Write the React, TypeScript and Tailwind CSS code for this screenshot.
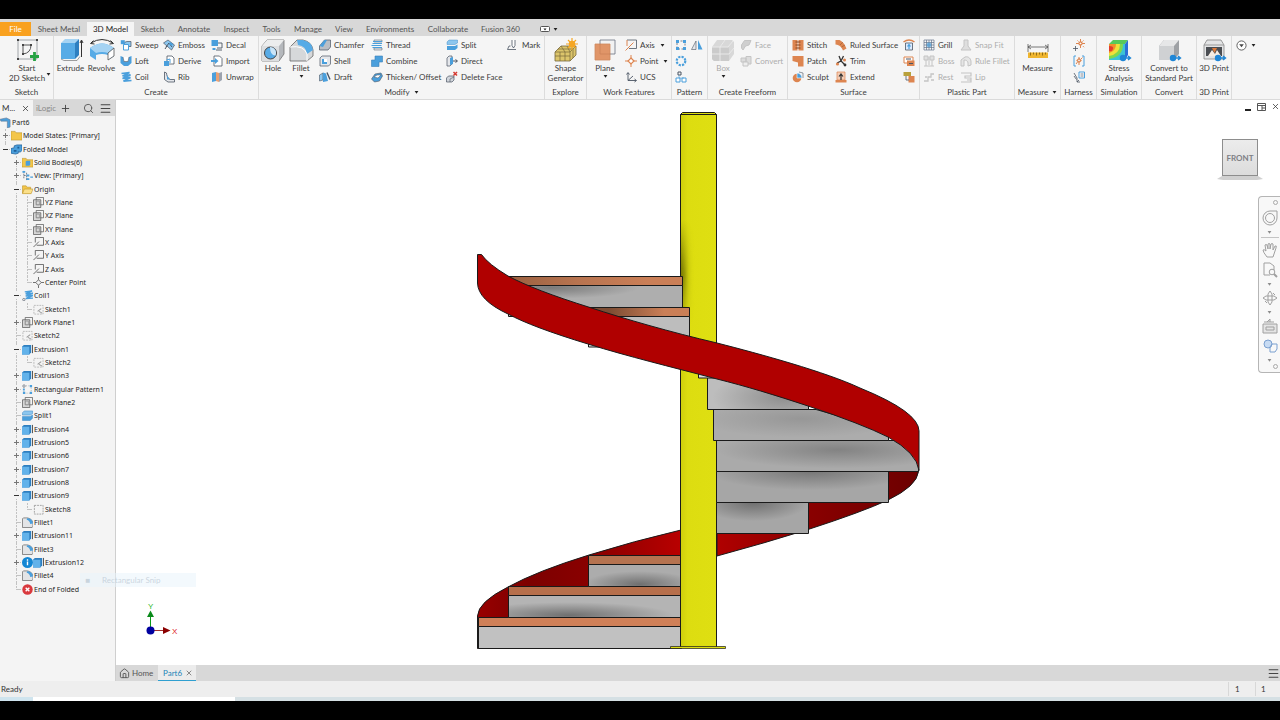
import React from 'react';
import { Menu, Plus, Search, X, Home } from 'lucide-react';
import clsx from 'clsx';

const BLUE = '#4a9fdc';
const LIGHT = '#8cc6ee';
const DARK = '#4b5563';
const ORANGE = '#dd8550';
const MUTE = '#c4c4c4';

// Iconos pequeños de la cinta, en una retícula de 12x12
const SMALL: Record<string, React.ReactNode> = {
  sweep: <><path d="M4 5.500Q4 2.500 7 2.500h4v5h-4" fill={LIGHT} stroke={DARK} strokeWidth=".7" /><path d="M.8 1.200h4v4h-4z" fill={BLUE} /><path d="M3.500 5.500h5v5.500h-5z" fill="#fff" stroke={BLUE} /></>,
  loft: <><path d="M.5 1l2.500 1 1 4.500h4L9 2l2.500-1v7L8 11H4L.5 8z" fill={BLUE} /><path d="M3 2l1 4.500h4L9 2" fill="#fff" stroke={DARK} strokeWidth=".6" /></>,
  coil: <path d="M1.500 2.500l8-1-7 3.400 8-1-8 3.600 8-1-7 3.600 8-.6" fill="none" stroke={BLUE} strokeWidth="1.700" />,
  emboss: <><path d="M.5 4l4.500-3 6.500 5-3 5z" fill={LIGHT} stroke={DARK} strokeWidth=".7" /><path d="M3 8l3-4 3 4M2 10l2-3" stroke={DARK} fill="none" /><path d="M7 3l3 2-1 2-3-2z" fill={BLUE} /></>,
  derive: <><path d="M4 1h5l2 2v6H4z" fill="#fff" stroke={DARK} strokeWidth=".8" /><path d="M1 6h5v5H1z" fill={BLUE} /><path d="M3.500 5L7 4v4" fill="none" stroke={BLUE} /></>,
  rib: <><path d="M1.500 1v7.500L5 11h6.500V8.500H7C4.500 7 3.500 4 3.500 2z" fill="#e5e7eb" stroke={DARK} strokeWidth=".8" /><path d="M4 3c0 3 2 5 4 5.500H4z" fill={BLUE} /></>,
  decal: <><path d="M.5 1h6.500v6H.5z" fill={BLUE} /><path d="M7 4h4v5H6M5 11h6" fill="none" stroke={DARK} strokeWidth=".9" /><path d="M1.500 9h3v2h-3z" fill={BLUE} /></>,
  import: <><path d="M3 1h5.500L11 3.500V11H3z" fill="#fff" stroke={DARK} strokeWidth=".8" /><path d="M0 5h4V3l3.500 3L4 9V7H0z" fill={BLUE} /></>,
  unwrap: <><path d="M1 2l4-1v9l-4 1z" fill={BLUE} /><path d="M5 1l3 1v9l-3-1z" fill="#e8a074" /><path d="M8 2l3-1v8l-3 2z" fill="#9ca3af" /></>,
  chamfer: <><path d="M.5 7l5-6h6v7L9 11H.5z" fill="#b9bec5" stroke={DARK} strokeWidth=".7" /><path d="M.5 7l5-6h2.500L4 8z" fill={BLUE} /></>,
  shell: <><path d="M1 3l2-2h8.500v8L9.500 11H1z" fill="#e5e7eb" stroke={DARK} strokeWidth=".7" /><path d="M3 4h5v5H3z" fill={BLUE} /><path d="M5 4h3v3H5z" fill="#fff" /></>,
  draft: <><path d="M.5 4l3.500-2v7l-3.500 1z" fill={LIGHT} stroke={DARK} strokeWidth=".6" /><path d="M4 1.500l3 1 2 7.500-5 1z" fill={BLUE} /><path d="M8 1.500l3 7" stroke={DARK} strokeWidth="1.400" /></>,
  thread: <><path d="M3 1h8v2H3zM3 9h8v2H3z" fill="#e5e7eb" stroke={DARK} strokeWidth=".5" /><path d="M1.500 4.500h9.500M.5 6.500h10M1.500 8.500h9.500M2 2.500h9" stroke={BLUE} strokeWidth="1.100" /></>,
  combine: <path d="M.5 5H4V1h7.500v6H8v4.500H.5z" fill={BLUE} stroke="#3b82b8" strokeWidth=".6" />,
  thicken: <><path d="M.5 8L4 3l6-1 1.500 3-3 5-5 1z" fill={BLUE} stroke={DARK} strokeWidth=".6" /><path d="M3 6l3-2h4L7 7z" fill="#fff" stroke={DARK} strokeWidth=".5" /></>,
  split: <><path d="M1 3l2-2h8.500v3L9 5.500H1z" fill={LIGHT} stroke="#2e7fc0" strokeWidth=".4" /><path d="M1 7h8l2.500-1.500V9L9 11H1z" fill={BLUE} /></>,
  direct: <><path d="M1 3l2-2h3v8l-2 2H1z" fill="#e5e7eb" stroke={DARK} strokeWidth=".7" /><path d="M4 3l3-1v7l-3 1z" fill={BLUE} /><path d="M7 6h4M9.500 4.500L11.500 6 9.500 7.500" fill="none" stroke={DARK} /></>,
  deleteFace: <><path d="M.5 7l2-2H8v4l-2 2H.5z" fill="#d1d5db" stroke={DARK} strokeWidth=".7" /><path d="M4 11V8l4-2" fill="none" stroke={DARK} strokeWidth=".6" /><path d="M7.500 1l3.500 3.500M11 1L7.500 4.500" stroke="#d63a32" strokeWidth="1.500" /></>,
  mark: <><path d="M5 1v5.500L6.500 9 8 6.500V1" fill="#fff" stroke={DARK} strokeWidth=".8" /><path d="M3.500 7H2l-1.500 3.500h8.500" fill="none" stroke={DARK} strokeWidth=".8" /></>,
  axis: <><path d="M2 1h9.500v8.500H4" fill="none" stroke={DARK} strokeWidth=".8" /><path d="M2 1v6M.5 11.500l8-8" stroke={ORANGE} fill="none" /></>,
  point: <><path d="M6 3l3 3-3 3-3-3z" fill="#fff" stroke={ORANGE} strokeWidth="1.200" /><path d="M6 0v3M6 9v3M0 6h3M9 6h3" stroke={ORANGE} /></>,
  ucs: <><path d="M3 2v7.500h8M3 9.500l5-4.500M1.500 3.500L3 1.500l1.500 2M9.500 8L11.500 9.500l-2 1.500" fill="none" stroke={DARK} strokeWidth=".9" /></>,
  rectPattern: <><path d="M2 2h8v8H2z" fill="none" stroke={DARK} strokeWidth=".7" strokeDasharray="2 1.500" /><path d="M1 1h3v3H1zM8 1h3v3H8zM1 8h3v3H1zM8 8h3v3H8z" fill={BLUE} /></>,
  circPattern: <circle cx="6" cy="6" r="4.300" fill="none" stroke={BLUE} strokeWidth="2.200" strokeDasharray="2.200 1.177" />,
  sketchPattern: <><path d="M3 1h3v3H3z" fill="none" stroke={DARK} /><path d="M1 7h4v4H1zM7 7h4v4H7z" fill="#fff" stroke={BLUE} /><path d="M4 4v3h5" fill="none" stroke={BLUE} strokeWidth=".6" /></>,
  mirror: <><path d="M5 2v8.500H.5z" fill="#e5e7eb" stroke={DARK} strokeWidth=".6" /><path d="M7 1v9.500h4.500z" fill={BLUE} /></>,
  face: <path d="M1.500 6l3-4.500H11L9 6 5.500 7 3 11 1.500 9z" fill="#cfcfcf" stroke={MUTE} />,
  convert: <><path d="M1 3h5v4H1zM6 1.500h5v7.500H6z" fill="#dcdcdc" stroke={MUTE} /><path d="M3 7h5v4H3z" fill="#eee" stroke={MUTE} /></>,
  stitch: <><path d="M.5 1h5v10.500h-5zM6.500 1h5v10.500h-5z" fill={ORANGE} /><path d="M3.500 3h5M3.500 6h5M3.500 9h5" stroke="#7c3f1d" strokeWidth=".9" /></>,
  patch: <path d="M.5 1h11v10.500H6V7.500L.5 6z" fill={ORANGE} />,
  sculpt: <><circle cx="5" cy="7" r="4.300" fill={ORANGE} /><path d="M5 2a5 5 0 0 1 5 5H5z" fill={BLUE} stroke="#fff" strokeWidth=".6" /><path d="M7 1l4 1v5" fill="none" stroke={DARK} strokeWidth=".6" /></>,
  ruled: <><path d="M.5 1h4C8 3 9.500 5 11.500 9.500L8 11.500C6.500 8 5 6 .5 5.500z" fill={ORANGE} /><path d="M5 6L8 3M6.500 8L10 6" stroke="#9c552c" strokeWidth=".6" /></>,
  trim: <><path d="M4 1l2 5 4 4M8.500 1L6 6l-4 2" stroke="#333" strokeWidth="1.300" fill="none" /><circle cx="9.500" cy="5" r="1.500" fill={ORANGE} /><circle cx="2.500" cy="9" r="1.600" fill={ORANGE} /><circle cx="10" cy="10" r="1.400" fill="#333" /></>,
  extend: <><path d="M.5 9h11v2.500H.5z" fill={ORANGE} /><path d="M2 1h8v8H2z" fill="#f4cdb5" stroke={ORANGE} strokeWidth=".7" /><path d="M6 9V4M4 5.500L6 3l2 2.500" fill="none" stroke="#333" strokeWidth="1.200" /></>,
  replaceFace: <><path d="M.5 3Q6-1 11.500 3" fill="none" stroke={ORANGE} strokeWidth="1.500" /><path d="M2.500 4h7v7h-7z" fill="#dbeafe" stroke={DARK} strokeWidth=".8" /><path d="M6 10V6M4.500 7.500L6 5.500l1.500 2" stroke={BLUE} strokeWidth="1.200" fill="none" /></>,
  repair: <><path d="M1 2h9v6H1z" fill="#fff" stroke={ORANGE} /><path d="M4 5.500h7.500V11H4z" fill={ORANGE} /><path d="M3 4h5M6 8.500h4" stroke={DARK} /></>,
  fitMesh: <><path d="M.5 1H8v4H.5z" fill="#b9a13c" /><path d="M5.500 5h6v6.500h-6z" fill={ORANGE} /><path d="M3 5v4h3" fill="none" stroke={DARK} strokeWidth=".8" /></>,
  grill: <><path d="M1 1h10v10H1zM3.500 1v10M6 1v10M8.500 1v10M1 3.500h10M1 6h10M1 8.500h10" stroke="#64748b" strokeWidth=".7" fill="none" /><circle cx="6" cy="6" r="2.400" fill={BLUE} opacity=".7" /></>,
  boss: <path d="M1 1h4v4H1zM7 1h4v4H7zM3 5v6M9 5v6M1 11h10M6 2v8" fill="#e0e0e0" stroke={MUTE} />,
  rest: <path d="M1 10h4V6h3V3h3M2 6h2M8 9h3" fill="none" stroke={MUTE} strokeWidth="1.300" />,
  snapFit: <path d="M4 1h4v6l3 4H1l3-4z" fill="#dedede" stroke={MUTE} />,
  ruleFillet: <path d="M1 5l4-3c4-1 6 2 6 5v3l-3 1V8c0-2-2-3-4-3v6H1z" fill="#e6e6e6" stroke={MUTE} />,
  lip: <path d="M1 2h10v3H5v2h6v4H1M7 9h4" fill="none" stroke={MUTE} strokeWidth="1.200" />,
  harnessAdd: <><path d="M7.500 2.500l2 2-2 2-2-2z" fill="#fff" stroke={ORANGE} strokeWidth="1.200" /><path d="M7.500 0v2M7.500 7v2M3 4.500h2M10 4.500h2M4.500 1.500l1 1M10 7.200l1 1M10.500 1.500l-1 1" stroke={ORANGE} /><path d="M0 9.500h5M2.500 7v5" stroke={DARK} strokeWidth=".8" /></>,
  harnessGroup: <><path d="M3 1H1v10h2M9 1h2v10H9" fill="none" stroke={BLUE} /><path d="M6 3.500l2 2-2 2-2-2z" fill="none" stroke={ORANGE} strokeWidth="1.200" /><path d="M6 2v1.500M6 8v2M3 9l1.500-2M8 4l1.500-1.500" stroke={ORANGE} /></>,
  harnessProps: <><path d="M6 1h5.500v6H6z" fill="#fff" stroke={BLUE} /><path d="M7.500 3h3M7.500 5h3" stroke={DARK} strokeWidth=".7" /><path d="M1 2l3 5v4h3M1 5l2.500 3.500M6 9l-2 2" stroke={DARK} fill="none" strokeWidth=".8" /></>,
};

// Iconos grandes, retícula de 26x24
const LARGE: Record<string, React.ReactNode> = {
  sketch: <><path d="M4 2h19v19H4z" fill="none" stroke="#8a8f96" strokeWidth=".8" /><path d="M9 7v9M9 7h8q0 8-8 9" fill="none" stroke="#555" /><g fill="#444"><path d="M3 1h2v2H3zM22 1h2v2h-2zM3 20h2v2H3zM8 6h2v2H8zM16 6h2v2h-2zM8 15h2v2H8z" /></g><path d="M16 18.500h9M20.500 14v9" stroke="#27a244" strokeWidth="2.800" /></>,
  extrude: <><path d="M3 5l4-4h14l-4 4z" fill="#a5d3f3" /><path d="M3 5h14v16H3z" fill="#57abe6" /><path d="M17 5l4-4v16l-4 4z" fill="#2e7fc0" /><path d="M3 21l3 1.500h13l3-4" fill="none" stroke="#777" strokeWidth=".7" /><path d="M23.500 3v16M22 5l1.500-3L25 5" fill="none" stroke="#333" /></>,
  revolve: <><path d="M1 10q12-9 24 0v8l-6 4v-5q-6-2-12 0v5l-6-4z" fill="#57abe6" /><path d="M1 10q12-9 24 0l-6 5q-6-2-12 0z" fill="#a5d3f3" /><path d="M19 15l6-5v8l-6 4z" fill="#fff" stroke="#555" strokeWidth=".8" /><path d="M2 5Q13-2 24 5M21.500 2.500L24.500 5.500l-4 .5M4.500 2.500L1.500 5.500l4 .5" fill="none" stroke="#333" /></>,
  hole: <><path d="M2 8l5-6h17v14l-5 7H2z" fill="#b5b8bc" stroke="#666" strokeWidth=".7" /><path d="M2 8h17v15H2z" fill="#dcdee0" /><path d="M2 8l5-6h17l-5 6z" fill="#eceded" /><circle cx="10.500" cy="15" r="6" fill="#57abe6" stroke="#444" /><path d="M10 9a6 6 0 0 1 5.500 8.500q-5.500 0-5.500-8.500z" fill="#c9e4f7" /></>,
  fillet: <><path d="M2 23V9l7-7h6q9 2 10 10v6l-6 5z" fill="#d6d8da" stroke="#666" strokeWidth=".8" /><path d="M9 2h6q9 2 10 10l-6 4q-1-8-9-9z" fill="#57abe6" /><path d="M2 9q14-2 17 7v7" fill="none" stroke="#fff" /></>,
  shape: <><path d="M2 14l6-6h15v9l-6 6H2z" fill="#dcc56b" stroke="#77683a" strokeWidth=".8" /><path d="M2 14h15v9M17 14l6-6M7 14v9M12 14v9M2 18h15M5 11h15M20 11v9M8 8l4 6M14 8l3 6" fill="none" stroke="#77683a" strokeWidth=".7" /><path d="M19 0v12M13 6h12M15 2l8 8M23 2l-8 8" stroke="#f5a623" strokeWidth="1.200" /><circle cx="19" cy="6" r="3.200" fill="#f5a623" /></>,
  plane: <><path d="M8 2h15v14H8z" fill="#f2f2f2" stroke="#6b7280" strokeWidth=".8" /><path d="M3 6h15v16H3z" fill="#dd8550" opacity=".85" stroke="#c97745" strokeWidth=".8" /></>,
  box: <><path d="M2 9l5-7h15l2 2v12l-5 7H4l-2-2z" fill="#d8d8d8" /><path d="M2 9h15q2 0 2 2v12H4l-2-2z" fill="#cbcbcb" /><path d="M10 9v14M2 16h17l5-6M10 9l5-7M2 9h16l5-6" fill="none" stroke="#e9e9e9" /></>,
  measure: <><path d="M3 6v8M23 6v8M3 9h20M6 7L3 9l3 2M20 7l3 2-3 2" fill="none" stroke="#555" strokeWidth=".8" /><path d="M3 14.500h20v5.500H3z" fill="#efb52f" /><path d="M5.500 14.500v3M8.500 14.500v2M11.500 14.500v3M14.500 14.500v2M17.500 14.500v3M20.500 14.500v2" stroke="#7a5a10" strokeWidth=".8" /></>,
  stress: <><path d="M3 6l4-4h15l-3 4z" fill="#58c95a" /><path d="M19 6l3-4v15l-3 5z" fill="#2b6fd6" /><path d="M3 6h16v16H3z" fill="#3cc3d6" /><path d="M3 6h14q0 13-14 15z" fill="#7fd84e" /><path d="M3 6h11q0 10-11 12z" fill="#f1e13a" /><path d="M3 6h7q0 7-7 9z" fill="#f2902c" /><path d="M3 8q5 0 4 3t-4 2z" fill="#e23b2c" /><circle cx="17" cy="20" r="3.200" fill="#1f86d6" /><path d="M18 20h6M22 18l2.500 2-2.500 2" stroke="#1f86d6" strokeWidth="1.400" fill="none" /></>,
  convertPart: <><path d="M3 8l5-6h15v14l-5 6H3z" fill="#9ea1a5" /><path d="M3 8h15v14H3z" fill="#cfd1d3" /><path d="M3 8l5-6h15l-5 6z" fill="#e6e7e8" /><circle cx="17" cy="20" r="3.200" fill="#1f86d6" /><path d="M18 20h6M22 18l2.500 2-2.500 2" stroke="#1f86d6" strokeWidth="1.400" fill="none" /></>,
  print: <><path d="M3 7l3-5h14l3 5v14H3z" fill="#e3e4e5" stroke="#777" strokeWidth=".7" /><path d="M3 7h20" stroke="#999" /><path d="M5 9h16v9H5z" fill="#4a4d52" /><path d="M7 18l4-6 3 4 2-4 4 6z" fill="#f6ece3" /><path d="M11 10h5l-2.500 5z" fill="#dd7a3a" /><circle cx="17" cy="20" r="3.200" fill="#1f86d6" /><path d="M18 20h6M22 18l2.500 2-2.500 2" stroke="#1f86d6" strokeWidth="1.400" fill="none" /></>,
};

// Iconos del navegador del modelo
const TREE_ICONS: Record<string, React.ReactNode> = {
  part: <path d="M0 2.500L7 1l4 2v8l-3 1V4.500H1z" fill={BLUE} stroke="#64748b" strokeWidth=".6" />,
  folder: <path d="M0 1.500h4.500l1 1.500H12v8H0z" fill="#f3c64a" stroke="#b98f22" strokeWidth=".6" />,
  folderOpen: <><path d="M.5 2h4l1 1.500h4V10h-9z" fill="#f3c64a" stroke="#b98f22" strokeWidth=".6" /><path d="M2.500 5.500H12L10 10.500H.5z" fill="#fbe08a" stroke="#b98f22" strokeWidth=".6" /></>,
  folded: <><path d="M0 5l3.500-1V2l3-1H12v6l-2 2-2-1v2l-3 1-5-1z" fill={BLUE} stroke="#1f5f98" strokeWidth=".8" /><path d="M3 6.500h3v2H3zM7 3h2v2H7z" fill="#1f5f98" /></>,
  bodies: <><path d="M0 1.500h4.500l1 1.500H12v8H0z" fill="#f3c64a" stroke="#b98f22" strokeWidth=".6" /><path d="M4 5l1-1h4v4.500L8 9.500H4z" fill={BLUE} /></>,
  view: <><path d="M2 1v9M2 6h3M5 3v8M5 10h2" stroke={DARK} strokeWidth=".8" fill="none" strokeDasharray="2 1" /><path d="M.5 1h3v2h-3zM5 5h3v2H5zM5 9h3v2H5zM9 7h3v1.500H9z" fill={BLUE} /></>,
  plane: <><path d="M3.500.5h8v8h-8z" fill="#f4f4f4" stroke="#555" strokeWidth=".8" /><path d="M.5 3h8v8.500h-8z" fill="#c9c9c9" fillOpacity=".7" stroke="#555" strokeWidth=".8" /><path d="M3.500 4.500h3.500v4H3.500z" fill="none" stroke="#777" strokeWidth=".6" /></>,
  axis: <path d="M2.500 6V.5h9V9H4M.5 11l6-6" fill="none" stroke="#555" strokeWidth=".9" />,
  center: <path d="M6 3l3 3-3 3-3-3zM6 0v3M6 9v3M0 6h3M9 6h3" fill="none" stroke="#555" strokeWidth=".9" />,
  coil: <><path d="M3 2l8-1-7 3.300 8-.8-8 3.200 8-.7-8 3.300 8-.5" fill="none" stroke={BLUE} strokeWidth="1.500" /><circle cx="2" cy="10.500" r="1.300" fill="none" stroke={DARK} strokeWidth=".7" /></>,
  sketch: <path d="M1.500 1.500h9.500v9.500H1.500z" fill="none" stroke="#888" strokeWidth=".8" strokeDasharray="2 1" />,
  sketchShared: <><path d="M1 1.500h10v9.500H1z" fill="none" stroke="#aaa" strokeWidth=".8" strokeDasharray="2 1" /><path d="M5 8l4-3M10 10L6.500 8" stroke="#999" strokeWidth="1.100" /></>,
  extrusion: <><path d="M0 3l2-2h8v8l-2 2.500H0z" fill="#2e7fc0" /><path d="M0 3h8v8.500H0z" fill="#62b2ea" /><path d="M11.500 1v9" stroke="#333" strokeWidth=".9" /></>,
  pattern: <><path d="M2 2h8v8H2z" fill="none" stroke="#777" strokeWidth=".6" strokeDasharray="1 1.500" /><path d="M8.500 1H11v2.500H8.500zM1 8.500h2.500V11H1zM8.500 8.500H11V11H8.500zM1 5h2v2H1z" fill={BLUE} /><circle cx="2.200" cy="2.200" r="1.300" fill="#fff" stroke={DARK} strokeWidth=".7" /></>,
  split: <><path d="M.5 3l2-2h9v3L9 5.500H.5z" fill={LIGHT} stroke="#2e7fc0" strokeWidth=".5" /><path d="M.5 7H9l2.500-1.500V9L9 11.500H.5z" fill={BLUE} stroke="#2e7fc0" strokeWidth=".5" /></>,
  fillet: <><path d="M.5 11.500V2l1-1h4.500q5.500 1 6 6v3l-1 1.500z" fill="#e3e4e6" stroke="#666" strokeWidth=".8" /><path d="M6 1q5.500 1 6 6L9 7.500Q8.500 4 5 3z" fill={BLUE} /></>,
  end: <><circle cx="6" cy="6" r="5.700" fill="#d9393e" /><path d="M4 4l4 4M8 4L4 8" stroke="#fff" strokeWidth="1.500" /></>,
};

const SmallIcon = ({ name }: { name: string }) => (
  <svg viewBox="0 0 12 12" className="w-3 h-3 shrink-0" aria-hidden="true">{SMALL[name]}</svg>
);

const Caret = ({ className }: { className?: string }) => (
  <svg viewBox="0 0 6 4" className={clsx('w-[5px] h-[3px] shrink-0', className)} aria-hidden="true"><path d="M.5 0h5L3 3.500z" fill="#222" /></svg>
);

const BigButton = ({ icon, label, width, disabled, caret }: { icon: string; label: string[]; width: string; disabled?: boolean; caret?: boolean }) => (
  <button disabled={disabled} className={clsx('flex flex-col items-center shrink-0 h-[46px] leading-[10px] whitespace-nowrap', width, disabled && 'text-[#a9a9a9]')}>
    <svg viewBox="0 0 26 24" className="w-[26px] h-[26px] shrink-0" aria-hidden="true">{LARGE[icon]}</svg>
    {label.map(l => <span key={l}>{l}</span>)}
    {caret && <Caret className="mt-[2px]" />}
  </button>
);

type Item = [icon: string, label?: string, caret?: boolean];

const Column = ({ items, width, disabled }: { items: Item[]; width?: string; disabled?: boolean | boolean[] }) => (
  <div className={clsx('flex flex-col items-start shrink-0', width)}>
    {items.map(([icon, label, caret], i) => {
      const off = Array.isArray(disabled) ? disabled[i] : disabled;
      return (
        <button key={icon} disabled={off} aria-label={label || icon} className={clsx('flex items-center h-4 gap-[3px] whitespace-nowrap', off && 'text-[#adadad]')}>
          <SmallIcon name={icon} />
          {label}
          {caret && <Caret className="ml-[2px]" />}
        </button>
      );
    })}
  </div>
);

const Group = ({ title, width, caret, children }: { title: string; width: string; caret?: boolean; children: React.ReactNode }) => (
  <section className={clsx('flex flex-col shrink-0 border-r border-[#dcdcdc]', width)}>
    <div className="flex pt-px h-[49px]">{children}</div>
    <div className="flex items-center justify-center gap-[4px] h-[14px] leading-[14px] whitespace-nowrap">
      {title}
      {caret && <Caret />}
    </div>
  </section>
);

const TABS: [string, string][] = [
  ['Sheet Metal', 'w-[56px]'], ['3D Model', 'w-[47px]'], ['Sketch', 'w-[37px]'], ['Annotate', 'w-[46px]'],
  ['Inspect', 'w-[39px]'], ['Tools', 'w-[31px]'], ['Manage', 'w-[42px]'], ['View', 'w-[30px]'],
  ['Environments', 'w-[62px]'], ['Collaborate', 'w-[54px]'], ['Fusion 360', 'w-[51px]'],
];

const Ribbon = () => (
  <header className="shrink-0">
    <nav className="flex items-start h-[17px] pt-[3px] bg-[#d8d8d8] text-[#555]">
      <button className="w-[31px] h-[14px] bg-[#f9a11f] text-white">File</button>
      {TABS.map(([name, width]) => (
        <button key={name} className={clsx('h-[14px] whitespace-nowrap', width, name === '3D Model' && 'bg-[#f5f5f5] text-[#222]')}>{name}</button>
      ))}
      <button aria-label="Ribbon display" className="flex items-center gap-[3px] h-[14px] ml-[14px]">
        <svg viewBox="0 0 10 6" className="w-[10px] h-[6px]"><rect x=".5" y=".5" width="9" height="5" rx="1" fill="#fff" stroke="#555" /><path d="M3.500 2.500h3L5 4.500z" fill="#222" /></svg>
        <Caret />
      </button>
    </nav>
    <div className="flex h-16 bg-[#f5f5f5] border-b border-[#dadada] text-[#3c3c3c] overflow-hidden">
      <Group title="Sketch" width="w-[54px]">
        <BigButton icon="sketch" label={['Start', '2D Sketch']} width="w-[46px] ml-[4px]" />
        <Caret className="mt-[36px] -ml-[4px]" />
      </Group>
      <Group title="Create" width="w-[205px]">
        <BigButton icon="extrude" label={['Extrude']} width="w-[31px] ml-px" />
        <BigButton icon="revolve" label={['Revolve']} width="w-[31px]" />
        <Column width="w-[43px] ml-[3px]" items={[['sweep', 'Sweep'], ['loft', 'Loft'], ['coil', 'Coil']]} />
        <Column width="w-[48px]" items={[['emboss', 'Emboss'], ['derive', 'Derive'], ['rib', 'Rib']]} />
        <Column items={[['decal', 'Decal'], ['import', 'Import'], ['unwrap', 'Unwrap']]} />
      </Group>
      <Group title="Modify" width="w-[286px]" caret>
        <BigButton icon="hole" label={['Hole']} width="w-7" />
        <BigButton icon="fillet" label={['Fillet']} width="w-7" caret />
        <Column width="w-[52px] ml-[4px]" items={[['chamfer', 'Chamfer'], ['shell', 'Shell'], ['draft', 'Draft']]} />
        <Column width="w-[75px]" items={[['thread', 'Thread'], ['combine', 'Combine'], ['thicken', 'Thicken/ Offset']]} />
        <Column width="w-[61px]" items={[['split', 'Split'], ['direct', 'Direct'], ['deleteFace', 'Delete Face']]} />
        <Column items={[['mark', 'Mark']]} />
      </Group>
      <Group title="Explore" width="w-[42px]">
        <BigButton icon="shape" label={['Shape', 'Generator']} width="w-[41px]" />
      </Group>
      <Group title="Work Features" width="w-[85px]">
        <BigButton icon="plane" label={['Plane']} width="w-[36px]" caret />
        <Column width="ml-[2px]" items={[['axis', 'Axis', true], ['point', 'Point', true], ['ucs', 'UCS']]} />
      </Group>
      <Group title="Pattern" width="w-[36px]">
        <Column width="w-[16px] ml-[3px]" items={[['rectPattern'], ['circPattern'], ['sketchPattern']]} />
        <Column items={[['mirror']]} />
      </Group>
      <Group title="Create Freeform" width="w-[80px]">
        <BigButton icon="box" label={['Box']} width="w-[30px]" disabled caret />
        <Column width="ml-[2px]" items={[['face', 'Face'], ['convert', 'Convert']]} disabled />
      </Group>
      <Group title="Surface" width="w-[132px]">
        <Column width="w-[43px] ml-[4px]" items={[['stitch', 'Stitch'], ['patch', 'Patch'], ['sculpt', 'Sculpt']]} />
        <Column width="w-[68px]" items={[['ruled', 'Ruled Surface'], ['trim', 'Trim'], ['extend', 'Extend']]} />
        <Column items={[['replaceFace'], ['repair'], ['fitMesh']]} />
      </Group>
      <Group title="Plastic Part" width="w-[95px]">
        <Column width="w-[37px] ml-[3px]" items={[['grill', 'Grill'], ['boss', 'Boss'], ['rest', 'Rest']]} disabled={[false, true, true]} />
        <Column items={[['snapFit', 'Snap Fit'], ['ruleFillet', 'Rule Fillet'], ['lip', 'Lip']]} disabled />
      </Group>
      <Group title="Measure" width="w-[46px]" caret>
        <BigButton icon="measure" label={['Measure']} width="w-[45px]" />
      </Group>
      <Group title="Harness" width="w-[36px]">
        <Column width="ml-3" items={[['harnessAdd'], ['harnessGroup'], ['harnessProps']]} />
      </Group>
      <Group title="Simulation" width="w-[45px]">
        <BigButton icon="stress" label={['Stress', 'Analysis']} width="w-11" />
      </Group>
      <Group title="Convert" width="w-[55px]">
        <BigButton icon="convertPart" label={['Convert to', 'Standard Part']} width="w-[54px]" />
      </Group>
      <Group title="3D Print" width="w-[35px]">
        <BigButton icon="print" label={['3D Print']} width="w-[34px]" />
      </Group>
      <button aria-label="Show panels" className="flex items-center gap-1 h-4 mt-px ml-1">
        <svg viewBox="0 0 12 12" className="w-[11px] h-[11px]"><circle cx="6" cy="6" r="5" fill="#fff" stroke="#555" /><path d="M3.500 4.500h5L6 8z" fill="#444" /></svg>
        <Caret />
      </button>
    </div>
  </header>
);

type Node = { level: number; icon: string; label: string; toggle?: '+' | '-'; info?: boolean; last?: boolean };

const NODES: Node[] = [
  { level: 0, icon: 'part', label: 'Part6' },
  { level: 1, icon: 'folder', label: 'Model States: [Primary]', toggle: '+' },
  { level: 1, icon: 'folded', label: 'Folded Model', toggle: '-', last: true },
  { level: 2, icon: 'bodies', label: 'Solid Bodies(6)', toggle: '+' },
  { level: 2, icon: 'view', label: 'View: [Primary]', toggle: '+' },
  { level: 2, icon: 'folderOpen', label: 'Origin', toggle: '-' },
  { level: 3, icon: 'plane', label: 'YZ Plane' },
  { level: 3, icon: 'plane', label: 'XZ Plane' },
  { level: 3, icon: 'plane', label: 'XY Plane' },
  { level: 3, icon: 'axis', label: 'X Axis' },
  { level: 3, icon: 'axis', label: 'Y Axis' },
  { level: 3, icon: 'axis', label: 'Z Axis' },
  { level: 3, icon: 'center', label: 'Center Point', last: true },
  { level: 2, icon: 'coil', label: 'Coil1', toggle: '-' },
  { level: 3, icon: 'sketchShared', label: 'Sketch1', last: true },
  { level: 2, icon: 'plane', label: 'Work Plane1', toggle: '+' },
  { level: 2, icon: 'sketchShared', label: 'Sketch2' },
  { level: 2, icon: 'extrusion', label: 'Extrusion1', toggle: '-' },
  { level: 3, icon: 'sketchShared', label: 'Sketch2', last: true },
  { level: 2, icon: 'extrusion', label: 'Extrusion3', toggle: '+' },
  { level: 2, icon: 'pattern', label: 'Rectangular Pattern1', toggle: '+' },
  { level: 2, icon: 'plane', label: 'Work Plane2' },
  { level: 2, icon: 'split', label: 'Split1' },
  { level: 2, icon: 'extrusion', label: 'Extrusion4', toggle: '+' },
  { level: 2, icon: 'extrusion', label: 'Extrusion5', toggle: '+' },
  { level: 2, icon: 'extrusion', label: 'Extrusion6', toggle: '+' },
  { level: 2, icon: 'extrusion', label: 'Extrusion7', toggle: '+' },
  { level: 2, icon: 'extrusion', label: 'Extrusion8', toggle: '+' },
  { level: 2, icon: 'extrusion', label: 'Extrusion9', toggle: '-' },
  { level: 3, icon: 'sketch', label: 'Sketch8', last: true },
  { level: 2, icon: 'fillet', label: 'Fillet1' },
  { level: 2, icon: 'extrusion', label: 'Extrusion11', toggle: '+' },
  { level: 2, icon: 'fillet', label: 'Fillet3' },
  { level: 2, icon: 'extrusion', label: 'Extrusion12', toggle: '+', info: true },
  { level: 2, icon: 'fillet', label: 'Fillet4' },
  { level: 2, icon: 'end', label: 'End of Folded', last: true },
];

// Celda de guía: línea punteada vertical, ramal y signo +/-
const Guide = ({ line, branch, last, toggle }: { line?: boolean; branch?: boolean; last?: boolean; toggle?: string }) => (
  <svg className="w-[11px] h-full shrink-0" aria-hidden="true">
    {line && <path d={last ? 'M5.500 0v7' : 'M5.500 0v14'} stroke="#c2c2c2" strokeDasharray="2 1" />}
    {branch && <path d={toggle ? 'M9 6.500h1' : 'M6 6.500h4'} stroke="#c2c2c2" />}
    {toggle && <rect x="2" y="3" width="7" height="7" fill="#f4f4f4" />}
    {toggle && <path d="M3 6.500h5" stroke={toggle === '-' ? '#333' : '#777'} />}
    {toggle === '+' && <path d="M5.500 4v5" stroke="#777" />}
  </svg>
);

const Browser = () => (
  <aside className="w-[116px] shrink-0 flex flex-col bg-[#f4f4f4] border-r border-[#cfcfcf]">
    <div className="flex items-center h-[16px] bg-[#d8d8d8]">
      <button className="flex items-center justify-between w-[33px] h-full pl-[2px] pr-[3px] bg-[#f4f4f4] text-[#333]">M...<X size={9} /></button>
      <button className="w-[26px] text-[#8a8a8a]">iLogic</button>
      <button aria-label="Add tab" className="ml-px"><Plus size={11} color="#444" /></button>
      <button aria-label="Search" className="ml-auto"><Search size={11} color="#555" /></button>
      <button aria-label="Menu" className="ml-[5px] mr-[3px]"><Menu size={13} color="#444" /></button>
    </div>
    <ul className="grid auto-rows-fr h-[480px] font-['Noto_Sans',sans-serif] text-[7px] text-[#1f1f1f]">
      {NODES.map((n, i) => (
        <li key={i} className="flex items-center min-h-0 leading-[13px] whitespace-nowrap">
          {n.level > 1 && <Guide />}
          {n.level > 2 && <Guide line />}
          {n.level > 0 && <Guide line branch last={n.last} toggle={n.toggle} />}
          {n.info && (
            <svg viewBox="0 0 12 12" className="w-[11px] h-[11px] shrink-0"><circle cx="6" cy="6" r="6" fill="#1487d4" /><path d="M6 5v4M6 2.500v1.500" stroke="#fff" strokeWidth="1.500" /></svg>
          )}
          <svg viewBox="0 0 12 12" className="w-[11px] h-[11px] mr-px shrink-0" aria-hidden="true">{TREE_ICONS[n.icon]}</svg>
          {n.label}
        </li>
      ))}
    </ul>
  </aside>
);

const Shade = ({ id, cx, cy, r, dark, light }: { id: string; cx: string; cy: string; r: string; dark: string; light: string }) => (
  <radialGradient id={id} cx={cx} cy={cy} r={r}>
    <stop offset="0" stopColor={dark} />
    <stop offset="1" stopColor={light} />
  </radialGradient>
);

const Staircase = () => (
  <svg viewBox="116 100 1164 565" className="w-full h-full" role="img" aria-label="Spiral staircase, front view">
    <defs>
      <Shade id="s1" cx=".35" cy=".9" r=".6" dark="#707070" light="#b4b4b4" />
      <Shade id="s2" cx=".55" cy=".9" r=".6" dark="#707070" light="#acacac" />
      <Shade id="sA" cx=".4" cy="0" r=".6" dark="#6f6f6f" light="#a6a6a6" />
      <Shade id="sB" cx=".55" cy="0" r=".6" dark="#777777" light="#a6a6a6" />
      <Shade id="sC" cx=".6" cy=".3" r=".6" dark="#838383" light="#aaaaaa" />
      <Shade id="sD" cx=".5" cy=".3" r=".6" dark="#979797" light="#acacac" />
      <Shade id="sE" cx=".75" cy=".7" r=".7" dark="#8f8f8f" light="#bdbdbd" />
      <Shade id="sT" cx=".25" cy=".1" r=".5" dark="#7b7b7b" light="#aeaeae" />
      <linearGradient id="wood" x1="0" x2="1"><stop offset="0" stopColor="#9a6040" /><stop offset=".4" stopColor="#b87450" /><stop offset=".8" stopColor="#ca7f57" /></linearGradient>
      <linearGradient id="woodShade" x1="0" x2="1"><stop offset=".2" stopColor="#7c4c33" /><stop offset=".75" stopColor="#ca7f57" /></linearGradient>
      <linearGradient id="backLeft" gradientUnits="userSpaceOnUse" x1="478" y1="0" x2="680" y2="0"><stop offset="0" stopColor="#980000" /><stop offset=".25" stopColor="#7c0000" /><stop offset=".6" stopColor="#8c0000" /><stop offset="1" stopColor="#b80000" /></linearGradient>
      <linearGradient id="backRight" gradientUnits="userSpaceOnUse" x1="717" y1="0" x2="918" y2="0"><stop offset="0" stopColor="#b00000" /><stop offset=".45" stopColor="#8a0000" /><stop offset="1" stopColor="#6c0000" /></linearGradient>
      <linearGradient id="pole" x1="0" x2="1"><stop offset="0" stopColor="#cfcf0c" /><stop offset=".2" stopColor="#dddd10" /><stop offset="1" stopColor="#dfdf12" /></linearGradient>
      <linearGradient id="poleShade" x1="0" x2="1"><stop offset="0" stopColor="#5e5e00" /><stop offset="1" stopColor="#dddd10" stopOpacity="0" /></linearGradient>
      <Shade id="poleFade" cx=".5" cy=".5" r=".5" dark="#fff" light="#000" />
      <mask id="poleMask"><path d="M670 220h30v110h-30z" fill="url(#poleFade)" /></mask>
    </defs>
    <g stroke="#1a1a1a" strokeWidth="1" strokeLinejoin="round">
      {/* cara interior de la zanca */}
      <path d="M717 471.500H918.500Q917 486 888 500Q862 512 808 529.500Q765 543 717 556z" fill="url(#backRight)" />
      <path d="M681 530Q634 541 589 555Q537 571 508 587Q478 602 477.500 616V648.500H681z" fill="url(#backLeft)" />

      <path d="M478.500 626.500h203v22h-203z" fill="#c1c1c1" />
      <path d="M478.500 617.500h203v9h-203z" fill="#cf8058" />
      <path d="M508.500 595.500h173v22h-173z" fill="url(#s1)" />
      <path d="M508.500 586.500h173v9h-173z" fill="#b66f4b" />
      <path d="M588.500 564.500h93v22h-93z" fill="url(#s2)" />
      <path d="M588.500 555.500h93v9h-93z" fill="#b57350" />

      <path d="M680.500 114.500l2-2h32l2 2V647.500h-36z" fill="url(#pole)" />
      <path d="M680.500 114.500h36" fill="none" />
      <path d="M681 220h14v110h-14z" fill="url(#poleShade)" mask="url(#poleMask)" stroke="none" />
      <path d="M670.500 648.500v-2h55v2z" fill="#dede10" strokeWidth=".7" />

      <path d="M716.500 502.500h92v31h-92z" fill="url(#sA)" />
      <path d="M716.500 471.500h172v31h-172z" fill="url(#sB)" />
      <path d="M716.500 440.500H898L918.500 458v13.500h-202z" fill="url(#sC)" />
      <path d="M713.500 409.500H816L888.500 430v10.500h-175z" fill="url(#sD)" />
      <path d="M707.500 370L808.500 400v9.500h-101z" fill="url(#sE)" />
      <path d="M698.500 370v8h16" fill="#ddd" />

      <path d="M508.500 285.500h174v22h-174z" fill="url(#sT)" />
      <path d="M508.500 276.500h174v9h-174z" fill="url(#wood)" />
      <path d="M588.500 316.500h101v24h-101z" fill="#bdbdbd" />
      <path d="M588.500 307.500h101v9h-101z" fill="url(#woodShade)" />
      <path d="M508.500 310v6.500h8M588.500 340v7h14" fill="#ddd" />

      {/* cara exterior de la zanca */}
      <path
        d="M477.500 254.500h4Q488 264 508 276Q534 290 590 307.500C625 319 670 332 717 343C760 354 826 372 860 388Q919 412 919 431V470.500Q917 453 888 437Q862 424 808 406C775 395 745 386 717 379C668 366 630 357 588 344Q532 327 508 314Q478 300 477.500 283z"
        fill="#b00000"
      />
    </g>
  </svg>
);

const NAV_ICONS: [string, React.ReactNode, boolean][] = [
  ['Steering wheel', <><path d="M8 1h7v7a7 7 0 1 1-7-7z" /><circle cx="8" cy="8" r="4.500" /></>, true],
  ['Pan', <path d="M5 15q-4-5-4-7 1-1 3 1L3 3q1-1 2 0l1 4V2q1-1 2 0v5l1-5q1-1 2 0v6l2-4q2-1 1 2l-2 6-1 3z" />, false],
  ['Zoom', <><path d="M2 1h6l4 3v4M8 13H2V1" /><circle cx="10" cy="10" r="2.800" /><path d="M12 12l3 3" strokeWidth="2" /></>, true],
  ['Orbit', <><path d="M8 1l2 3v8l-2 3-2-3V4zM1 8l3-2h8l3 2-3 2H4z" /><path d="M11 3l2 2M5 13l-2-2" /></>, true],
  ['Look at', <path d="M1 6h14v9H1zM4 9h8v3H4zM2 4h10M5 4l3-3v3" fill="#e4e4e4" />, false],
  ['View face', <><circle cx="6" cy="6" r="4" fill="#c7dbf3" stroke="#7ba0d0" /><path d="M8 9l2-3h5v5l-2 3H8z" stroke="#7ba0d0" /></>, true],
];

const Viewport = () => (
  <main className="relative flex-1 min-h-0 bg-white overflow-hidden">
    <Staircase />

    <div className="absolute top-[2px] right-0 flex items-center gap-[5px] text-[#333]">
      <button aria-label="Minimize" className="w-[6px] h-[9px] mr-px border-b-2 border-[#222]" />
      <button aria-label="Restore" className="flex">
        <svg viewBox="0 0 9 8" className="w-[9px] h-2"><path d="M.5.5h8v7h-8zM.5 2.500h8M5 2.500v5M5 5h3.500" fill="none" stroke="#555" /></svg>
      </button>
      <button aria-label="Close"><X size={9} /></button>
    </div>

    <div className="absolute top-[39px] right-[22px] w-[36px]">
      <button className="block w-full h-[37px] border border-[#8d8d8d] bg-linear-to-b from-[#ececec] to-[#dcdcdc] text-[8px] font-bold text-[#7d8085]">FRONT</button>
      <svg viewBox="0 0 48 4" className="w-12 h-1 -ml-[6px] max-w-none"><path d="M6 0h36l5 3-6 1H7L1 3z" fill="#aaa" opacity=".55" /></svg>
    </div>

    <div className="absolute top-[96px] right-0 w-[22px] h-[177px] flex flex-col items-center pt-[3px] rounded-l-[4px] border border-r-0 border-[#b5b5b5] bg-[#f8f8f8]">
      <span className="self-end mr-[2px] w-[5px] h-[5px] shrink-0 rounded-full border border-[#aaa]" />
      {NAV_ICONS.map(([name, art, caret], i) => (
        <React.Fragment key={name}>
          <button aria-label={name} className={clsx('shrink-0', i === 0 ? 'mt-[5px]' : 'mt-[4px]')}>
            <svg viewBox="0 0 16 16" className="w-4 h-4" fill="none" stroke="#a0a0a0" strokeWidth="1">{art}</svg>
          </button>
          {caret && <Caret className="mt-[5px] opacity-50" />}
          {i === 0 && <span className="w-[18px] h-px shrink-0 mt-[3px] bg-[#c4c4c4]" />}
        </React.Fragment>
      ))}
      <span className="self-end mt-auto mb-[3px] mr-[2px] w-[5px] h-[5px] shrink-0 rounded-full border border-[#aaa]" />
    </div>

    <svg viewBox="0 0 36 36" className="absolute left-[28px] bottom-[28px] w-9 h-9" aria-hidden="true">
      <path d="M6.500 30V15" stroke="#0a9a1a" /><path d="M6.500 9.500L10 16H3z" fill="#0a8a1a" />
      <path d="M6 29.500h14" stroke="#a03030" /><path d="M26.500 29.500L19 26v7z" fill="#8b0000" />
      <circle cx="6.500" cy="29.500" r="4" fill="#0000a0" />
      <text x="4" y="8" fontSize="8" fontFamily="Liberation Sans, sans-serif" fill="#2db82d">Y</text>
      <text x="28" y="33" fontSize="8" fontFamily="Liberation Sans, sans-serif" fill="#d22">X</text>
    </svg>
  </main>
);

const App: React.FC = () => (
  <div className="relative min-h-screen flex flex-col bg-black font-['Lato',sans-serif] text-[8px] leading-[14px]">
    <div className="h-[19px] shrink-0" />
    <Ribbon />

    <div className="flex flex-1 bg-white">
      <Browser />
      <div className="flex flex-col flex-1 min-w-0">
        <Viewport />
        <div className="flex h-4 shrink-0 bg-[#d8d8d8] text-[#555]">
          <button className="flex items-center gap-[2px] w-[42px] pl-[3px]"><Home size={11} />Home</button>
          <button className="flex items-center gap-[3px] w-[38px] pl-[5px] bg-[#ececec] border-b border-[#2f9fd0] text-[#1c84b8]">Part6<X size={8} color="#555" /></button>
          <button aria-label="Document list" className="ml-auto"><Menu size={13} color="#444" /></button>
        </div>
      </div>
    </div>

    <footer className="shrink-0">
      <div className="flex items-center h-4 pl-px bg-[#eeeeee] text-[#333]">
        <span>Ready</span>
        <span className="ml-auto w-[27px] pl-[6px] border-l border-[#d8d8d8]">1</span>
        <span className="w-[25px] pl-[5px] border-l border-[#d8d8d8]">1</span>
      </div>
      <div className="flex h-1 bg-[#d5e0e4]">
        <div className="w-[33px] bg-[#cfe4ee]" />
        <div className="w-[202px] bg-white" />
      </div>
      <div className="h-[19px] bg-black" />
    </footer>

    <div className="absolute left-[80px] bottom-[133px] flex items-center w-[116px] h-[14px] bg-[#e8f3fb]/50 text-[#b9c6d2]/70">
      <span className="w-4 text-center">■</span>
      <span className="pl-[6px]">Rectangular Snip</span>
    </div>
  </div>
);

export default App;
